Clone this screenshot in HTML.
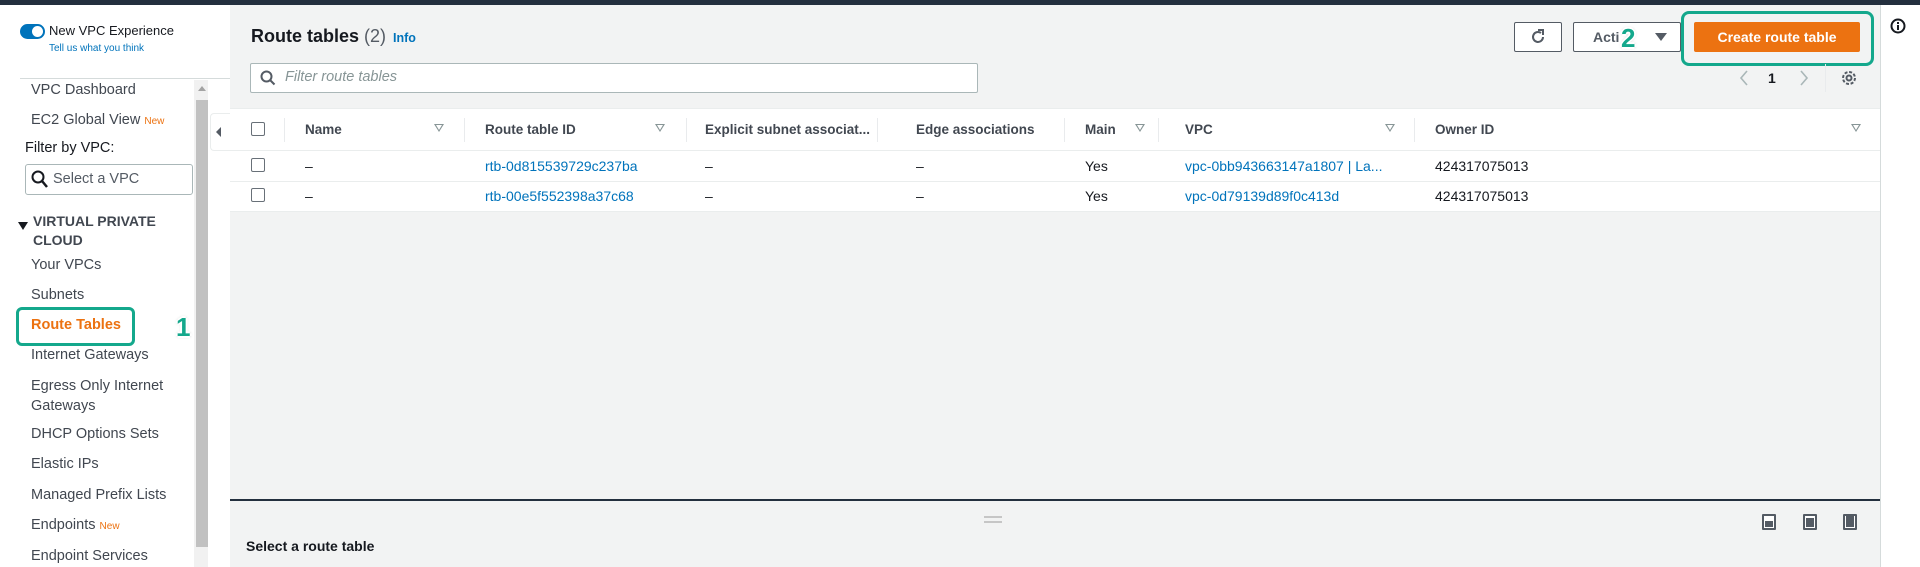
<!DOCTYPE html>
<html><head><meta charset="utf-8"><style>
*{margin:0;padding:0;box-sizing:border-box}
body{width:1920px;height:567px;overflow:hidden;background:#f2f3f3;font-family:"Liberation Sans",Arial,sans-serif;color:#16191f;position:relative;font-size:14px}
.a{position:absolute;white-space:nowrap}
.nav{position:absolute;left:31px;font-size:14.5px;color:#414750;white-space:nowrap}
.th{position:absolute;top:122px;font-weight:bold;font-size:13.5px;color:#414750}
.sep{position:absolute;top:118px;width:1px;height:24px;background:#e9ebed}
.fi{position:absolute;top:124px;width:0;height:0;border-left:5px solid transparent;border-right:5px solid transparent;border-top:8px solid #879596}
.fi:after{content:"";position:absolute;left:-3px;top:-7px;border-left:3px solid transparent;border-right:3px solid transparent;border-top:5px solid #fff}
.cb{position:absolute;left:251px;width:14px;height:14px;border:1.5px solid #687078;border-radius:2px;background:#fff}
.td{position:absolute;font-size:14px}
.lk{color:#0073bb}
</style></head><body>
<div class="a" style="left:0;top:0;width:1920px;height:5px;background:#232f3e"></div>
<div class="a" style="left:0;top:5px;width:230px;height:562px;background:#fff"></div>
<div class="a" style="left:20px;top:24px;width:25px;height:15px;border-radius:8px;background:#0073bb"></div>
<div class="a" style="left:32px;top:26px;width:11px;height:11px;border-radius:50%;background:#fff"></div>
<div class="a" style="left:49px;top:23px;font-size:13px;color:#16191f">New VPC Experience</div>
<div class="a" style="left:49px;top:43px;font-size:10px;color:#0073bb">Tell us what you think</div>
<div class="a" style="left:20px;top:78px;width:210px;height:1px;background:#d5dbdb"></div>
<div class="a" style="left:194px;top:80px;width:14px;height:487px;background:#f1f1f1"></div>
<div class="a" style="left:196px;top:100px;width:12px;height:447px;background:#c1c1c1"></div>
<div class="a" style="left:198px;top:86px;border-left:4px solid transparent;border-right:4px solid transparent;border-bottom:5px solid #a3a3a3"></div>
<div class="nav" style="top:82px">VPC Dashboard</div>
<div class="nav" style="top:112px">EC2 Global View <span style="color:#ec7211;font-size:10px">New</span></div>
<div class="nav" style="left:25px;top:140px;color:#16191f">Filter by VPC:</div>
<div class="a" style="left:25px;top:164px;width:168px;height:31px;border:1px solid #aab7b8;border-radius:3px;background:#fff"></div>
<svg class="a" style="left:31px;top:170px" width="18" height="19" viewBox="0 0 18 19"><circle cx="7" cy="7" r="5.5" fill="none" stroke="#16191f" stroke-width="2"/><path d="M11 11l5 6" stroke="#16191f" stroke-width="2.5"/></svg>
<div class="a" style="left:53px;top:171px;font-size:14.5px;color:#545b64">Select a VPC</div>
<div class="a" style="left:18px;top:222px;border-left:5px solid transparent;border-right:5px solid transparent;border-top:8px solid #16191f"></div>
<div class="a" style="left:33px;top:212px;font-weight:bold;font-size:14px;color:#414750;line-height:19px">VIRTUAL PRIVATE<br>CLOUD</div>
<div class="nav" style="top:257px">Your VPCs</div>
<div class="nav" style="top:287px">Subnets</div>
<div class="a" style="left:16px;top:307px;width:119px;height:39px;border:3px solid #14a88c;border-radius:6px"></div>
<div class="nav" style="top:317px;color:#ec7211;font-weight:bold">Route Tables</div>
<div class="a" style="left:176px;top:312px;font-size:26px;font-weight:bold;color:#14a88c;text-shadow:-2px 0 #fff,2px 0 #fff,0 -2px #fff,0 2px #fff,0 0 3px #999">1</div>
<div class="nav" style="top:347px">Internet Gateways</div>
<div class="nav" style="top:376px;line-height:20px">Egress Only Internet<br>Gateways</div>
<div class="nav" style="top:426px">DHCP Options Sets</div>
<div class="nav" style="top:456px">Elastic IPs</div>
<div class="nav" style="top:487px">Managed Prefix Lists</div>
<div class="nav" style="top:517px">Endpoints <span style="color:#ec7211;font-size:10px">New</span></div>
<div class="nav" style="top:548px">Endpoint Services</div>
<div class="a" style="left:210px;top:113px;width:22px;height:38px;background:#fff;border:1px solid #eaeded;border-right:none;border-radius:4px 0 0 4px"></div>
<div class="a" style="left:216px;top:127px;border-top:5px solid transparent;border-bottom:5px solid transparent;border-right:5px solid #545b64"></div>
<div class="a" style="left:1880px;top:5px;width:40px;height:562px;background:#fff;border-left:1px solid #d5dbdb"></div>
<svg class="a" style="left:1890px;top:18px" width="16" height="16" viewBox="0 0 16 16"><circle cx="8" cy="8" r="6.5" fill="none" stroke="#16191f" stroke-width="2"/><rect x="7" y="7" width="2" height="5" fill="#16191f"/><rect x="7" y="4" width="2" height="2" fill="#16191f"/></svg>
<div class="a" style="left:251px;top:26px;font-size:18px;font-weight:bold;color:#16191f">Route tables <span style="font-weight:normal;color:#545b64">(2)</span></div>
<div class="a" style="left:393px;top:31px;font-size:12.5px;font-weight:bold;color:#0073bb">Info</div>
<div class="a" style="left:250px;top:63px;width:728px;height:30px;border:1px solid #aab7b8;border-radius:2px;background:#fff"></div>
<svg class="a" style="left:260px;top:70px" width="16" height="16" viewBox="0 0 16 16"><circle cx="6.5" cy="6.5" r="5" fill="none" stroke="#545b64" stroke-width="2"/><path d="M10 10l4.5 4.5" stroke="#545b64" stroke-width="2"/></svg>
<div class="a" style="left:285px;top:69px;font-size:14.5px;font-style:italic;color:#879596">Filter route tables</div>
<div class="a" style="left:1514px;top:22px;width:48px;height:30px;border:1px solid #545b64;border-radius:2px;background:#fff"></div>
<svg class="a" style="left:1529px;top:28px" width="18" height="18" viewBox="0 0 18 18"><path d="M14 9a5 5 0 1 1-2-4" fill="none" stroke="#545b64" stroke-width="2"/><path d="M9 2h5v5" fill="none" stroke="#545b64" stroke-width="2"/></svg>
<div class="a" style="left:1573px;top:22px;width:108px;height:30px;border:1px solid #545b64;border-radius:2px;background:#fff"></div>
<div class="a" style="left:1593px;top:29px;font-weight:bold;font-size:14px;color:#545b64">Acti</div>
<div class="a" style="left:1655px;top:33px;border-left:6px solid transparent;border-right:6px solid transparent;border-top:8px solid #545b64"></div>
<div class="a" style="left:1621px;top:23px;font-size:26px;font-weight:bold;color:#14a88c;text-shadow:-2px 0 #fff,2px 0 #fff,0 -2px #fff,0 2px #fff,0 0 3px #999">2</div>
<div class="a" style="left:1681px;top:11px;width:193px;height:55px;border:3px solid #14a88c;border-radius:8px"></div>
<div class="a" style="left:1694px;top:22px;width:166px;height:30px;background:#ec7211;border-radius:2px;color:#fff;font-weight:bold;font-size:14px;text-align:center;line-height:30px">Create route table</div>
<svg class="a" style="left:1738px;top:70px" width="12" height="16" viewBox="0 0 12 16"><path d="M9 1L3 8l6 7" fill="none" stroke="#aab7b8" stroke-width="1.6"/></svg>
<div class="a" style="left:1768px;top:70px;font-weight:bold;font-size:14px">1</div>
<svg class="a" style="left:1798px;top:70px" width="12" height="16" viewBox="0 0 12 16"><path d="M3 1l6 7-6 7" fill="none" stroke="#aab7b8" stroke-width="1.6"/></svg>
<div class="a" style="left:1825px;top:64px;width:1px;height:28px;background:#e9ebed"></div>
<svg class="a" style="left:1840px;top:69px" width="18" height="18" viewBox="0 0 18 18"><circle cx="9" cy="9" r="2.5" fill="none" stroke="#545b64" stroke-width="2"/><circle cx="9" cy="9" r="6" fill="none" stroke="#545b64" stroke-width="2" stroke-dasharray="3 1.7"/></svg>
<div class="a" style="left:230px;top:108px;width:1650px;height:1px;background:#eaeded"></div>
<div class="a" style="left:230px;top:109px;width:1650px;height:102px;background:#fff"></div>
<div class="a" style="left:230px;top:150px;width:1650px;height:1px;background:#eaeded"></div>
<div class="a" style="left:230px;top:181px;width:1650px;height:1px;background:#eaeded"></div>
<div class="a" style="left:230px;top:211px;width:1650px;height:1px;background:#eaeded"></div>
<div class="cb" style="top:122px"></div>
<div class="cb" style="top:158px"></div>
<div class="cb" style="top:188px"></div>
<div class="sep" style="left:284px"></div><div class="sep" style="left:464px"></div><div class="sep" style="left:686px"></div><div class="sep" style="left:877px"></div><div class="sep" style="left:1064px"></div><div class="sep" style="left:1158px"></div><div class="sep" style="left:1414px"></div>
<div class="th" style="left:305px">Name</div><div class="fi" style="left:434px"></div>
<div class="th" style="left:485px">Route table ID</div><div class="fi" style="left:655px"></div>
<div class="th" style="left:705px">Explicit subnet associat...</div>
<div class="th" style="left:916px">Edge associations</div>
<div class="th" style="left:1085px">Main</div><div class="fi" style="left:1135px"></div>
<div class="th" style="left:1185px">VPC</div><div class="fi" style="left:1385px"></div>
<div class="th" style="left:1435px">Owner ID</div><div class="fi" style="left:1851px"></div>
<div class="td" style="left:305px;top:158px">–</div>
<div class="td lk" style="left:485px;top:158px">rtb-0d815539729c237ba</div>
<div class="td" style="left:705px;top:158px">–</div>
<div class="td" style="left:916px;top:158px">–</div>
<div class="td" style="left:1085px;top:158px">Yes</div>
<div class="td lk" style="left:1185px;top:158px">vpc-0bb943663147a1807 | La...</div>
<div class="td" style="left:1435px;top:158px">424317075013</div>
<div class="td" style="left:305px;top:188px">–</div>
<div class="td lk" style="left:485px;top:188px">rtb-00e5f552398a37c68</div>
<div class="td" style="left:705px;top:188px">–</div>
<div class="td" style="left:916px;top:188px">–</div>
<div class="td" style="left:1085px;top:188px">Yes</div>
<div class="td lk" style="left:1185px;top:188px">vpc-0d79139d89f0c413d</div>
<div class="td" style="left:1435px;top:188px">424317075013</div>
<div class="a" style="left:230px;top:499px;width:1650px;height:2px;background:#232f3e"></div>
<div class="a" style="left:984px;top:516px;width:18px;height:2px;background:#c6c6c6"></div>
<div class="a" style="left:984px;top:521px;width:18px;height:2px;background:#c6c6c6"></div>
<div class="a" style="left:1762px;top:514px;width:14px;height:16px;border:2px solid #545b64;border-radius:1px;background:#fff"><div style="position:absolute;left:1px;bottom:1px;width:8px;height:6px;background:#545b64"></div></div>
<div class="a" style="left:1803px;top:514px;width:14px;height:16px;border:2px solid #545b64;border-radius:1px;background:#fff"><div style="position:absolute;left:1px;bottom:1px;width:8px;height:9px;background:#545b64"></div></div>
<div class="a" style="left:1843px;top:514px;width:14px;height:16px;border:2px solid #545b64;border-radius:1px;background:#fff"><div style="position:absolute;left:1px;bottom:1px;width:8px;height:11px;background:#545b64"></div></div>
<div class="a" style="left:246px;top:538px;font-weight:bold;font-size:14px;color:#16191f">Select a route table</div>
</body></html>
